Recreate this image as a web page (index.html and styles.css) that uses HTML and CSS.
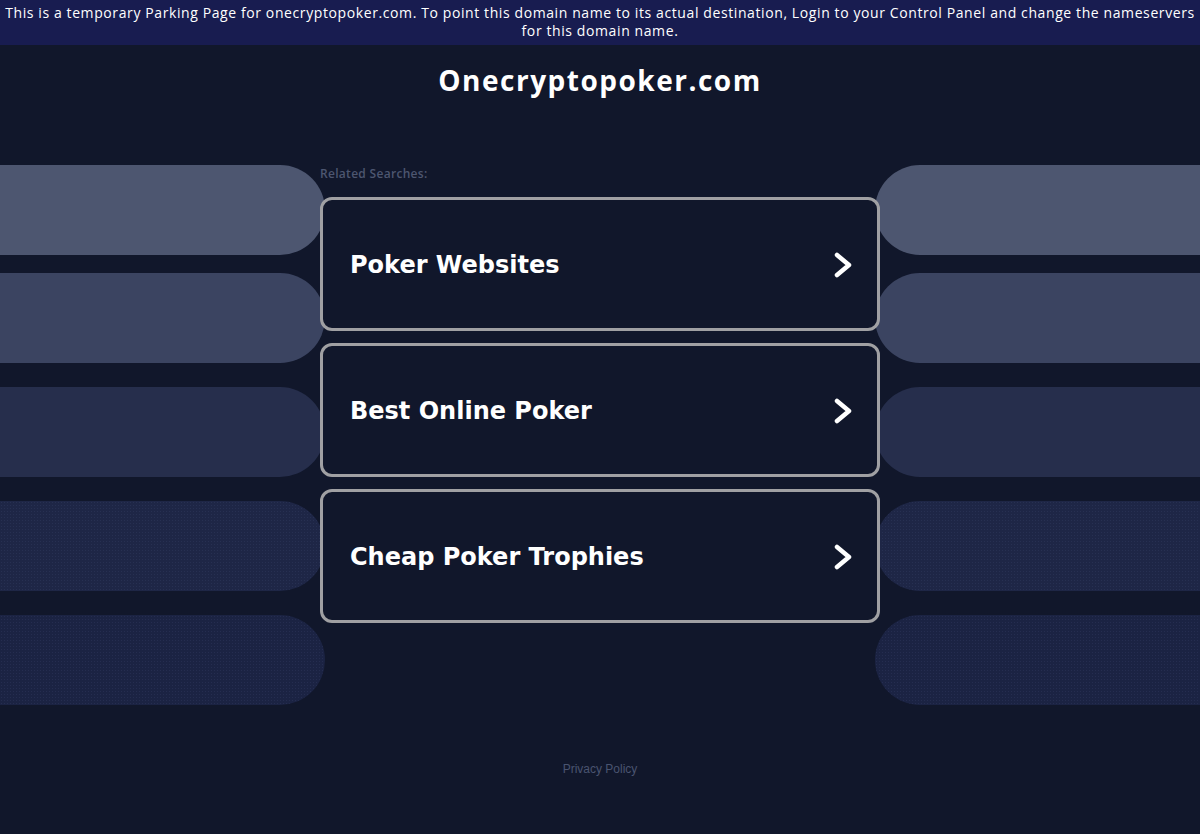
FILE: index.html
```html
<!DOCTYPE html>
<html>
<head>
<meta charset="utf-8">
<title>Onecryptopoker.com</title>
<link rel="stylesheet" href="styles.css">
</head>
<body>
<div class="banner">This is a temporary Parking Page for onecryptopoker.com. To point this domain name to its actual destination, Login to your Control Panel and change the nameservers for this domain name.</div>
<h1 class="domain">Onecryptopoker.com</h1>
<div class="main">
  <div class="side side-left">
    <div class="pill p1"></div>
    <div class="pill p2"></div>
    <div class="pill p3"></div>
    <div class="pill p4"></div>
    <div class="pill p5"></div>
  </div>
  <div class="center">
    <div class="related">Related Searches:</div>
    <a class="card" href="#"><span>Poker Websites</span><svg class="chev" viewBox="0 0 18 26" width="18" height="26"><polyline points="3,3 15,13 3,23" fill="none" stroke="#fff" stroke-width="4.5" stroke-linecap="round" stroke-linejoin="round"/></svg></a>
    <a class="card" href="#"><span>Best Online Poker</span><svg class="chev" viewBox="0 0 18 26" width="18" height="26"><polyline points="3,3 15,13 3,23" fill="none" stroke="#fff" stroke-width="4.5" stroke-linecap="round" stroke-linejoin="round"/></svg></a>
    <a class="card" href="#"><span>Cheap Poker Trophies</span><svg class="chev" viewBox="0 0 18 26" width="18" height="26"><polyline points="3,3 15,13 3,23" fill="none" stroke="#fff" stroke-width="4.5" stroke-linecap="round" stroke-linejoin="round"/></svg></a>
  </div>
  <div class="side side-right">
    <div class="pill p1"></div>
    <div class="pill p2"></div>
    <div class="pill p3"></div>
    <div class="pill p4"></div>
    <div class="pill p5"></div>
  </div>
</div>
<div class="footer"><a href="#">Privacy Policy</a></div>
</body>
</html>
```
FILE: styles.css
```css
html, body {
  margin: 0;
  padding: 0;
}
body {
  background: #11172b;
  width: 1200px;
  height: 834px;
  overflow: hidden;
  font-family: "Open Sans", "DejaVu Sans", sans-serif;
}
.banner {
  background: #181c50;
  color: #ffffff;
  font-size: 14px;
  line-height: 18px;
  letter-spacing: 0.6px;
  text-align: center;
  padding: 4px 2px 5px;
  height: 36px;
}
.domain {
  margin: 17px 0 0;
  text-align: center;
  color: #ffffff;
  font-family: "Open Sans", "DejaVu Sans", sans-serif;
  font-weight: 700;
  font-size: 28px;
  line-height: 36px;
  letter-spacing: 1.5px;
}
.main {
  display: flex;
  margin-top: 67px;
}
.side {
  width: 320px;
  display: flex;
  flex-direction: column;
  gap: 24px;
}
.side-left { align-items: flex-end; }
.side-right { align-items: flex-start; }
.pill {
  width: 325px;
  height: 90px;
  flex: none;
}
.side-left .pill { border-radius: 0 45px 45px 0; margin-right: -5px; }
.side-right .pill { border-radius: 45px 0 0 45px; margin-left: -5px; }
.side .p2 { margin-top: -6px; }
.p1 { background: #4d5670; }
.p2 { background: #3b4461; }
.p3 { background: #262e4c; }
.p4 {
  background-color: #1e2646;
  background-image: radial-gradient(rgba(60,70,110,0.3) 0.6px, transparent 0.8px);
  background-size: 3px 3px;
}
.p5 {
  background-color: #1b2343;
  background-image: radial-gradient(rgba(60,70,110,0.3) 0.6px, transparent 0.8px);
  background-size: 3px 3px;
}
.center {
  width: 560px;
  display: flex;
  flex-direction: column;
  position: relative;
  z-index: 1;
}
.related {
  font-size: 12px;
  line-height: 16px;
  letter-spacing: 0.3px;
  color: #4d5670;
  font-weight: 600;
  padding-top: 1px;
  margin-bottom: 15px;
}
.card {
  display: flex;
  align-items: center;
  justify-content: space-between;
  height: 126px;
  border: 3px solid #a0a0a3;
  border-radius: 12px;
  background: #11172b;
  padding: 2px 25px 0 27px;
  margin-bottom: 12px;
  text-decoration: none;
  color: #ffffff;
  font-family: "DejaVu Sans", sans-serif;
  font-weight: 700;
  font-size: 24px;
}
.chev { display: block; }
.footer {
  text-align: center;
  margin-top: 57px;
  font-family: "Liberation Sans", Arial, sans-serif;
  font-size: 12px;
  line-height: 14px;
}
.footer a {
  color: #4a5470;
  text-decoration: none;
}
```
